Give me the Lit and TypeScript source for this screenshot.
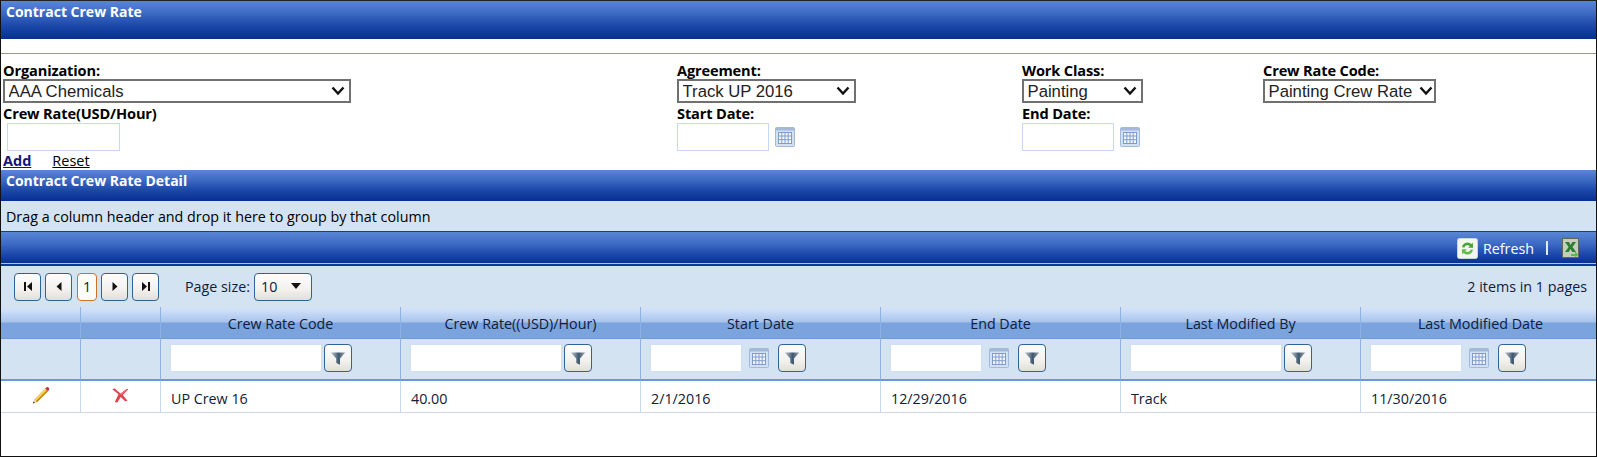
import { LitElement, html, css } from "lit";
import { customElement } from "lit/decorators.js";

const chev = (d: string) => html`<svg width="10" height="11" viewBox="0 0 10 11"><path d="${d}" fill="#111"/></svg>`;

const funnel = html`<svg width="18" height="18" viewBox="0 0 16 16"><defs><linearGradient id="fg" x1="0" x2="1"><stop offset="0" stop-color="#c7d0da"/><stop offset=".55" stop-color="#3f566c"/><stop offset="1" stop-color="#a0aebb"/></linearGradient></defs><path d="M1.500 3h13L9.800 8.500V14L6.400 12.500V8.500z" fill="url(#fg)"/></svg>`;

const calendar = html`<svg width="20" height="20" viewBox="0 0 20 20"><rect x=".5" y=".5" width="19" height="19" rx="1" fill="#d3e0f3" stroke="#a3b9da"/><rect x="1" y="1" width="18" height="2.500" fill="#a3b9da"/><rect x="3.500" y="5.500" width="13" height="11" fill="#f4f8fd" stroke="#7f9cc9"/><path d="M6.800 5.500v11M10 5.500v11M13.200 5.500v11M3.500 9h13M3.500 12.700h13" stroke="#7f9cc9"/></svg>`;

const pencil = html`<svg width="20" height="20" viewBox="0 0 20 20"><path d="M3.200 14.500 14.200 3.600l2.600 2.600L5.800 17.200z" fill="#f0b429"/><path d="M3.200 14.500 14.200 3.600l1.200 1.200L4.500 15.800z" fill="#f8d66a"/><path d="M5.800 17.200 16.800 6.200l-.8-.8L5 16.400z" fill="#b8791a"/><path d="M3.200 14.500 2 18.400l3.800-1.200z" fill="#e9d4a8"/><path d="M2.600 16.500 2 18.400l1.900-.6z" fill="#222"/><path d="M14.200 3.600l1-1a1.700 1.700 0 0 1 2.400 0l.2.2a1.700 1.700 0 0 1 0 2.400l-1 1z" fill="#c8353c"/></svg>`;

const cross = html`<svg width="17" height="15" viewBox="0 0 16 15"><path d="M0 1.500 6 6.300 2.300 14l2.500.5L8.300 9l4.300 4.300 2.400-.6L10.300 7 15.800 1.200 14.600.7 8 5.500 1.800.3z" fill="#e8404c"/><path d="M1.800.3 8 5.500 14.600.7 9 6.800z" fill="#f58a90"/></svg>`;

const refresh = html`<svg width="21" height="21" viewBox="0 0 21 21"><rect x=".5" y=".5" width="20" height="20" rx="2" fill="#f3f5ef" stroke="#c9d4d8"/><path d="M5 9.200A5.600 5.600 0 0 1 14.400 6l1.400-1.300.3 5h-5l1.700-1.600A3.300 3.300 0 0 0 7.400 9.600z" fill="#46a53a"/><path d="M16 11.800A5.600 5.600 0 0 1 6.600 15l-1.400 1.300-.3-5h5l-1.700 1.600a3.300 3.300 0 0 0 5.400-1.500z" fill="#62bb4b"/></svg>`;

const excel = html`<svg width="17" height="20" viewBox="0 0 17 20"><rect x=".5" y=".5" width="16" height="19" fill="#c7cdbd" stroke="#5d6657"/><path d="M3 4h4l1.600 3L10.400 4H14l-3.500 5L14 14h-3.600L8.500 11 6.700 14H3l3.600-5z" fill="#2e7d32"/><path d="M9 16h4v-2.500l3.500 3.200L13 19.500V18H9z" fill="#4fc04a"/></svg>`;

const columns = [
  { title: "Crew Rate Code", value: "UP Crew 16", date: false },
  { title: "Crew Rate((USD)/Hour)", value: "40.00", date: false },
  { title: "Start Date", value: "2/1/2016", date: true },
  { title: "End Date", value: "12/29/2016", date: true },
  { title: "Last Modified By", value: "Track", date: false },
  { title: "Last Modified Date", value: "11/30/2016", date: true },
];

@customElement("app-root")
export class AppRoot extends LitElement {
  static styles = css`
    :host {
      display: block;
      box-sizing: border-box;
      width: 1597px;
      height: 457px;
      border: 1px solid #111;
      border-top-color: #222;
      background: #fff;
      overflow: hidden;
      font-family: "Open Sans", "Noto Sans", sans-serif;
      font-size: 14.300px;
      color: #10203a;
    }
    * { box-sizing: border-box; }
    .band {
      background: linear-gradient(#5a86d6 0%, #3f6cc4 30%, #1c48aa 65%, #05308f 100%);
      color: #fff;
      font-weight: 700;
      font-size: 14px;
      padding: 2px 5px;
      line-height: 18px;
    }
    .band.main { height: 38px; }
    .band.detail { height: 31px; }
    .spacer { height: 15px; border-bottom: 1px solid #9a9a85; }
    .form {
      display: grid;
      grid-template-columns: 674px 345px 241px 1fr;
      padding: 7px 0 0 2px;
      height: 97px;
      color: #000;
    }
    .field { display: flex; flex-direction: column; align-items: flex-start; }
    .field label {
      font-weight: 700;
      font-size: 14.600px;
      line-height: 18px;
      height: 18px;
      white-space: nowrap;
      letter-spacing: -0.15px;
    }
    .row-2 { margin-top: 1px; }
    select {
      appearance: none;
      -webkit-appearance: none;
      height: 24px;
      border: 2px solid #707070;
      background: #fff url("data:image/svg+xml,%3Csvg xmlns='http://www.w3.org/2000/svg' width='14' height='10'%3E%3Cpath d='M1.500 1.500 7 7.500l5.500-6' fill='none' stroke='%23111' stroke-width='2.400'/%3E%3C/svg%3E") no-repeat right 4px center;
      font-family: "Liberation Sans", Arial, sans-serif;
      font-size: 16.700px;
      color: #222;
      padding: 0 0 0 3.500px;
      border-radius: 0;
    }
    .s-org { width: 348px; }
    .s-agr { width: 179px; }
    .s-work { width: 121px; }
    .s-code { width: 173px; background-position: right 1px center; }
    .input {
      border: 1px solid #c6d8f4;
      background: #fff;
      height: 28px;
      display: block;
    }
    .rate-input { width: 113px; margin: 1px 0 0 4px; }
    .date-input { width: 92px; }
    .date-wrap { display: flex; align-items: flex-start; gap: 6px; margin-top: 1px; }
    .cal { display: block; margin-top: 4px; line-height: 0; }
    .actions {
      display: flex;
      gap: 21px;
      padding: 1px 0 0 2px;
      height: 19px;
      line-height: 18px;
      color: #000;
    }
    .actions a { color: #000; text-decoration: underline; font-size: 14.500px; }
    .actions a.add { font-weight: 700; color: #14147a; }
    .group {
      height: 30px;
      background: #d3e3f2;
      padding: 0 5px;
      line-height: 31px;
      color: #000;
    }
    .toolbar {
      height: 35px;
      border-top: 1px solid #0f3fa0;
      border-bottom: 2px solid #0c3a9c;
      box-shadow: inset 0 -1px 0 #a9c3ea;
      background: linear-gradient(#5a86d6 0%, #3f6cc4 35%, #1c48aa 70%, #05308f 100%);
      display: flex;
      align-items: center;
      justify-content: flex-end;
      padding-right: 17px;
      color: #fff;
    }
    .tb-icon { line-height: 0; margin-right: 5px; }
    .tb-icon.last { margin: 0; }
    .tb-sep { margin: 0 14px 0 12px; width: 2px; height: 14px; background: #dfe9f8; }
    .pager {
      height: 41px;
      background: #d3e3f2;
      display: flex;
      align-items: center;
      padding: 0 9px 0 13px;
      gap: 4px;
      color: #10203a;
    }
    .pbtn {
      width: 27px;
      height: 28px;
      border: 1.500px solid #2f6496;
      border-radius: 4px;
      background: linear-gradient(#fdfdfd, #f3f1ec 60%, #e2dfd8);
      display: flex;
      align-items: center;
      justify-content: center;
      line-height: 0;
      flex: none;
    }
    .pnum {
      width: 20px;
      height: 28px;
      border: 1.500px solid #c8732c;
      border-radius: 4px;
      background: #fbfbf8;
      display: flex;
      align-items: center;
      justify-content: center;
      margin-left: 1px;
    }
    .psize { margin-left: 22px; margin-right: 0; }
    .combo {
      width: 58px;
      height: 28px;
      border: 1.500px solid #2f6496;
      border-radius: 4px;
      background: linear-gradient(#fdfdfd, #f3f1ec 60%, #e2dfd8);
      display: flex;
      align-items: center;
      justify-content: space-between;
      padding: 0 10px 0 6px;
    }
    .combo i { width: 0; height: 0; border: 5px solid transparent; border-top: 6px solid #111; border-bottom: 0; margin-top: -2px; }
    .items { margin-left: auto; }
    .grid {
      display: grid;
      grid-template-columns: 79px 80px repeat(6, 240px);
      width: 1599px;
    }
    .cell { border-left: 1px solid #8fb2e6; }
    .cell:nth-child(8n + 1) { border-left: 0; }
    .h {
      height: 31px;
      background: linear-gradient(#d3e3f2 0%, #cfe0f8 10%, #a8c3ec 48%, #7ba3de 52%, #7ba3de 100%);
      display: flex;
      align-items: center;
      justify-content: center;
      padding-top: 1px;
    }
    .f {
      height: 43px;
      background: #d3e3f2;
      border-top: 1px solid #6d98d6;
      border-bottom: 2px solid #6d98d6;
      display: flex;
      align-items: center;
      padding: 0 0 2px 9px;
    }
    .f .txt { width: 152px; margin-right: 2px; border-color: #d0e0f8; }
    .f .dt { width: 92px; margin-right: 7px; border-color: #d0e0f8; }
    .f .cal { margin: 0 9px 0 0; }
    .fbtn {
      width: 28px;
      height: 28px;
      border: 1.500px solid #2f6496;
      border-radius: 4px;
      background: linear-gradient(#fdfdfd, #f3f1ec 60%, #e2dfd8);
      display: flex;
      align-items: center;
      justify-content: center;
      line-height: 0;
      flex: none;
    }
    .d {
      height: 32px;
      background: #fff;
      border-bottom: 1px solid #ccd6e8;
      border-left-color: #c6d8f4;
      display: flex;
      align-items: center;
      padding: 3px 0 0 10px;
    }
    .d.icon { justify-content: center; padding: 0 0 3px; line-height: 0; }
  `;

  render() {
    return html`
      <div class="band main">Contract Crew Rate</div>
      <div class="spacer"></div>
      <div class="form">
        <div class="field">
          <label>Organization:</label>
          <select class="s-org"><option>AAA Chemicals</option></select>
          <label class="row-2">Crew Rate(USD/Hour)</label>
          <span class="input rate-input"></span>
        </div>
        <div class="field">
          <label>Agreement:</label>
          <select class="s-agr"><option>Track UP 2016</option></select>
          <label class="row-2">Start Date:</label>
          <div class="date-wrap"><span class="input date-input"></span><span class="cal">${calendar}</span></div>
        </div>
        <div class="field">
          <label>Work Class:</label>
          <select class="s-work"><option>Painting</option></select>
          <label class="row-2">End Date:</label>
          <div class="date-wrap"><span class="input date-input"></span><span class="cal">${calendar}</span></div>
        </div>
        <div class="field">
          <label>Crew Rate Code:</label>
          <select class="s-code"><option>Painting Crew Rate</option></select>
        </div>
      </div>
      <div class="actions"><a class="add">Add</a><a>Reset</a></div>
      <div class="band detail">Contract Crew Rate Detail</div>
      <div class="group">Drag a column header and drop it here to group by that column</div>
      <div class="toolbar">
        <span class="tb-icon">${refresh}</span><span>Refresh</span><span class="tb-sep"></span><span class="tb-icon last">${excel}</span>
      </div>
      <div class="pager">
        <span class="pbtn">${chev("M1 1h2v9H1zM9 1v9L4 5.500z")}</span>
        <span class="pbtn">${chev("M7.500 1v9L2.500 5.500z")}</span>
        <span class="pnum">1</span>
        <span class="pbtn">${chev("M2.500 1v9l5-4.500z")}</span>
        <span class="pbtn">${chev("M1 1v9l5-4.500zM7 1h2v9H7z")}</span>
        <span class="psize">Page size:</span>
        <span class="combo"><span>10</span><i></i></span>
        <span class="items">2 items in 1 pages</span>
      </div>
      <div class="grid">
        <div class="cell h"></div>
        <div class="cell h"></div>
        ${columns.map((c) => html`<div class="cell h">${c.title}</div>`)}
        <div class="cell f"></div>
        <div class="cell f"></div>
        ${columns.map((c) => html`<div class="cell f">
          ${c.date
            ? html`<span class="input dt"></span><span class="cal">${calendar}</span>`
            : html`<span class="input txt"></span>`}
          <span class="fbtn">${funnel}</span>
        </div>`)}
        <div class="cell d icon">${pencil}</div>
        <div class="cell d icon">${cross}</div>
        ${columns.map((c) => html`<div class="cell d">${c.value}</div>`)}
      </div>
    `;
  }
}
